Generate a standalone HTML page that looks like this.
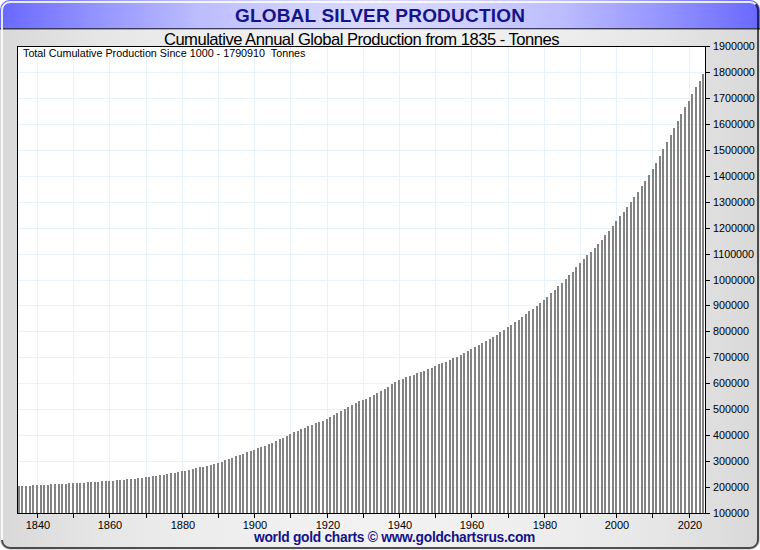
<!DOCTYPE html>
<html><head><meta charset="utf-8">
<style>
html,body{margin:0;padding:0;background:#fff;}
body{width:760px;height:550px;position:relative;overflow:hidden;font-family:"Liberation Sans",sans-serif;}
.frame{position:absolute;left:0;top:0;width:760px;height:550px;border-radius:10px;overflow:hidden;
background:linear-gradient(to right,#d8d8d8 0%,#e6e6e6 13%,#ededed 26%,#f0f0f0 38%,#f2f2f2 50%,#f0f0f0 62%,#ededed 74%,#e6e6e6 87%,#d8d8d8 100%);}
.hdr{position:absolute;left:0;top:0;width:760px;height:28px;
background:linear-gradient(to right,#6868ff 0%,#9595ff 13%,#bcbcff 26%,#cfcfff 38%,#d9d9ff 50%,#cfcfff 62%,#bcbcff 74%,#9595ff 87%,#6868ff 100%);}
.hl1{position:absolute;left:0;top:28px;width:760px;height:1px;background:#3a3a5c;}
.hl2{position:absolute;left:0;top:29px;width:760px;height:1px;background:linear-gradient(to right,#7a7aff 0%,#dadaff 50%,#7a7aff 100%);}
.title{position:absolute;left:0;width:760px;top:5px;text-align:center;font-weight:bold;font-size:19px;letter-spacing:0.2px;color:#141488;line-height:22px;}
.sub{position:absolute;left:0;width:723px;top:30px;text-align:center;font-size:16.6px;letter-spacing:-0.5px;color:#000;line-height:20px;}
.tot{position:absolute;left:23px;top:46px;font-size:10.75px;color:#000;line-height:14px;white-space:pre;}
.yl{position:absolute;left:713px;font-size:10.75px;line-height:14px;color:#000;}
.xl{position:absolute;top:518px;width:41px;text-align:center;font-size:11px;line-height:14px;color:#000;}
.foot{position:absolute;left:0;width:789px;top:529px;text-align:center;font-weight:bold;font-size:13.8px;letter-spacing:-0.28px;color:#141488;line-height:17px;}
svg{position:absolute;left:0;top:0;}
</style></head><body>
<div class="frame">
<div class="hdr"></div><div class="hl1"></div><div class="hl2"></div>
</div>
<svg width="760" height="550" shape-rendering="crispEdges">
<rect x="17" y="46" width="689" height="468" fill="#fff"/>
<g fill="#e7f3f9"><rect x="37" y="47" width="1" height="466"/><rect x="73" y="47" width="1" height="466"/><rect x="109" y="47" width="1" height="466"/><rect x="146" y="47" width="1" height="466"/><rect x="182" y="47" width="1" height="466"/><rect x="218" y="47" width="1" height="466"/><rect x="254" y="47" width="1" height="466"/><rect x="290" y="47" width="1" height="466"/><rect x="327" y="47" width="1" height="466"/><rect x="363" y="47" width="1" height="466"/><rect x="399" y="47" width="1" height="466"/><rect x="435" y="47" width="1" height="466"/><rect x="471" y="47" width="1" height="466"/><rect x="508" y="47" width="1" height="466"/><rect x="544" y="47" width="1" height="466"/><rect x="580" y="47" width="1" height="466"/><rect x="616" y="47" width="1" height="466"/><rect x="652" y="47" width="1" height="466"/><rect x="689" y="47" width="1" height="466"/><rect x="18" y="487" width="687" height="1"/><rect x="18" y="461" width="687" height="1"/><rect x="18" y="435" width="687" height="1"/><rect x="18" y="409" width="687" height="1"/><rect x="18" y="383" width="687" height="1"/><rect x="18" y="357" width="687" height="1"/><rect x="18" y="331" width="687" height="1"/><rect x="18" y="305" width="687" height="1"/><rect x="18" y="280" width="687" height="1"/><rect x="18" y="254" width="687" height="1"/><rect x="18" y="228" width="687" height="1"/><rect x="18" y="202" width="687" height="1"/><rect x="18" y="176" width="687" height="1"/><rect x="18" y="150" width="687" height="1"/><rect x="18" y="124" width="687" height="1"/><rect x="18" y="98" width="687" height="1"/><rect x="18" y="72" width="687" height="1"/></g>
<g fill="#838383"><rect x="18" y="486" width="2" height="27"/><rect x="21" y="486" width="2" height="27"/><rect x="25" y="486" width="2" height="27"/><rect x="29" y="486" width="2" height="27"/><rect x="32" y="485" width="2" height="28"/><rect x="36" y="485" width="2" height="28"/><rect x="40" y="485" width="2" height="28"/><rect x="43" y="485" width="2" height="28"/><rect x="47" y="485" width="2" height="28"/><rect x="50" y="484" width="2" height="29"/><rect x="54" y="484" width="2" height="29"/><rect x="58" y="484" width="2" height="29"/><rect x="61" y="484" width="2" height="29"/><rect x="65" y="484" width="2" height="29"/><rect x="68" y="483" width="2" height="30"/><rect x="72" y="483" width="2" height="30"/><rect x="76" y="483" width="2" height="30"/><rect x="79" y="483" width="2" height="30"/><rect x="83" y="483" width="2" height="30"/><rect x="87" y="482" width="2" height="31"/><rect x="90" y="482" width="2" height="31"/><rect x="94" y="482" width="2" height="31"/><rect x="97" y="482" width="2" height="31"/><rect x="101" y="481" width="2" height="32"/><rect x="105" y="481" width="2" height="32"/><rect x="108" y="481" width="2" height="32"/><rect x="112" y="481" width="2" height="32"/><rect x="116" y="480" width="2" height="33"/><rect x="119" y="480" width="2" height="33"/><rect x="123" y="480" width="2" height="33"/><rect x="126" y="479" width="2" height="34"/><rect x="130" y="479" width="2" height="34"/><rect x="134" y="479" width="2" height="34"/><rect x="137" y="478" width="2" height="35"/><rect x="141" y="478" width="2" height="35"/><rect x="145" y="477" width="2" height="36"/><rect x="148" y="477" width="2" height="36"/><rect x="152" y="476" width="2" height="37"/><rect x="155" y="476" width="2" height="37"/><rect x="159" y="475" width="2" height="38"/><rect x="163" y="475" width="2" height="38"/><rect x="166" y="474" width="2" height="39"/><rect x="170" y="473" width="2" height="40"/><rect x="174" y="473" width="2" height="40"/><rect x="177" y="472" width="2" height="41"/><rect x="181" y="471" width="2" height="42"/><rect x="184" y="471" width="2" height="42"/><rect x="188" y="470" width="2" height="43"/><rect x="192" y="469" width="2" height="44"/><rect x="195" y="468" width="2" height="45"/><rect x="199" y="467" width="2" height="46"/><rect x="202" y="467" width="2" height="46"/><rect x="206" y="466" width="2" height="47"/><rect x="210" y="465" width="2" height="48"/><rect x="213" y="464" width="2" height="49"/><rect x="217" y="463" width="2" height="50"/><rect x="221" y="462" width="2" height="51"/><rect x="224" y="460" width="2" height="53"/><rect x="228" y="459" width="2" height="54"/><rect x="231" y="458" width="2" height="55"/><rect x="235" y="456" width="2" height="57"/><rect x="239" y="455" width="2" height="58"/><rect x="242" y="454" width="2" height="59"/><rect x="246" y="452" width="2" height="61"/><rect x="250" y="451" width="2" height="62"/><rect x="253" y="450" width="2" height="63"/><rect x="257" y="448" width="2" height="65"/><rect x="260" y="447" width="2" height="66"/><rect x="264" y="446" width="2" height="67"/><rect x="268" y="444" width="2" height="69"/><rect x="271" y="443" width="2" height="70"/><rect x="275" y="441" width="2" height="72"/><rect x="279" y="439" width="2" height="74"/><rect x="282" y="438" width="2" height="75"/><rect x="286" y="436" width="2" height="77"/><rect x="289" y="434" width="2" height="79"/><rect x="293" y="432" width="2" height="81"/><rect x="297" y="431" width="2" height="82"/><rect x="300" y="429" width="2" height="84"/><rect x="304" y="428" width="2" height="85"/><rect x="307" y="426" width="2" height="87"/><rect x="311" y="425" width="2" height="88"/><rect x="315" y="423" width="2" height="90"/><rect x="318" y="422" width="2" height="91"/><rect x="322" y="421" width="2" height="92"/><rect x="326" y="419" width="2" height="94"/><rect x="329" y="417" width="2" height="96"/><rect x="333" y="415" width="2" height="98"/><rect x="336" y="413" width="2" height="100"/><rect x="340" y="411" width="2" height="102"/><rect x="344" y="409" width="2" height="104"/><rect x="347" y="407" width="2" height="106"/><rect x="351" y="405" width="2" height="108"/><rect x="355" y="403" width="2" height="110"/><rect x="358" y="401" width="2" height="112"/><rect x="362" y="400" width="2" height="113"/><rect x="365" y="399" width="2" height="114"/><rect x="369" y="397" width="2" height="116"/><rect x="373" y="395" width="2" height="118"/><rect x="376" y="393" width="2" height="120"/><rect x="380" y="391" width="2" height="122"/><rect x="384" y="389" width="2" height="124"/><rect x="387" y="387" width="2" height="126"/><rect x="391" y="384" width="2" height="129"/><rect x="394" y="382" width="2" height="131"/><rect x="398" y="380" width="2" height="133"/><rect x="402" y="379" width="2" height="134"/><rect x="405" y="377" width="2" height="136"/><rect x="409" y="376" width="2" height="137"/><rect x="413" y="375" width="2" height="138"/><rect x="416" y="373" width="2" height="140"/><rect x="420" y="372" width="2" height="141"/><rect x="423" y="371" width="2" height="142"/><rect x="427" y="369" width="2" height="144"/><rect x="431" y="368" width="2" height="145"/><rect x="434" y="366" width="2" height="147"/><rect x="438" y="364" width="2" height="149"/><rect x="441" y="363" width="2" height="150"/><rect x="445" y="362" width="2" height="151"/><rect x="449" y="360" width="2" height="153"/><rect x="452" y="358" width="2" height="155"/><rect x="456" y="357" width="2" height="156"/><rect x="460" y="355" width="2" height="158"/><rect x="463" y="353" width="2" height="160"/><rect x="467" y="351" width="2" height="162"/><rect x="470" y="349" width="2" height="164"/><rect x="474" y="347" width="2" height="166"/><rect x="478" y="345" width="2" height="168"/><rect x="481" y="343" width="2" height="170"/><rect x="485" y="341" width="2" height="172"/><rect x="489" y="339" width="2" height="174"/><rect x="492" y="337" width="2" height="176"/><rect x="496" y="335" width="2" height="178"/><rect x="499" y="332" width="2" height="181"/><rect x="503" y="330" width="2" height="183"/><rect x="507" y="327" width="2" height="186"/><rect x="510" y="325" width="2" height="188"/><rect x="514" y="322" width="2" height="191"/><rect x="518" y="320" width="2" height="193"/><rect x="521" y="317" width="2" height="196"/><rect x="525" y="314" width="2" height="199"/><rect x="528" y="311" width="2" height="202"/><rect x="532" y="309" width="2" height="204"/><rect x="536" y="306" width="2" height="207"/><rect x="539" y="303" width="2" height="210"/><rect x="543" y="300" width="2" height="213"/><rect x="546" y="297" width="2" height="216"/><rect x="550" y="293" width="2" height="220"/><rect x="554" y="290" width="2" height="223"/><rect x="557" y="286" width="2" height="227"/><rect x="561" y="283" width="2" height="230"/><rect x="565" y="279" width="2" height="234"/><rect x="568" y="275" width="2" height="238"/><rect x="572" y="272" width="2" height="241"/><rect x="575" y="267" width="2" height="246"/><rect x="579" y="263" width="2" height="250"/><rect x="583" y="259" width="2" height="254"/><rect x="586" y="255" width="2" height="258"/><rect x="590" y="252" width="2" height="261"/><rect x="594" y="248" width="2" height="265"/><rect x="597" y="244" width="2" height="269"/><rect x="601" y="240" width="2" height="273"/><rect x="604" y="235" width="2" height="278"/><rect x="608" y="231" width="2" height="282"/><rect x="612" y="226" width="2" height="287"/><rect x="615" y="221" width="2" height="292"/><rect x="619" y="216" width="2" height="297"/><rect x="623" y="212" width="2" height="301"/><rect x="626" y="207" width="2" height="306"/><rect x="630" y="202" width="2" height="311"/><rect x="633" y="197" width="2" height="316"/><rect x="637" y="192" width="2" height="321"/><rect x="641" y="186" width="2" height="327"/><rect x="644" y="181" width="2" height="332"/><rect x="648" y="175" width="2" height="338"/><rect x="652" y="169" width="2" height="344"/><rect x="655" y="163" width="2" height="350"/><rect x="659" y="156" width="2" height="357"/><rect x="662" y="149" width="2" height="364"/><rect x="666" y="142" width="2" height="371"/><rect x="670" y="135" width="2" height="378"/><rect x="673" y="128" width="2" height="385"/><rect x="677" y="121" width="2" height="392"/><rect x="680" y="114" width="2" height="399"/><rect x="684" y="107" width="2" height="406"/><rect x="688" y="101" width="2" height="412"/><rect x="691" y="94" width="2" height="419"/><rect x="695" y="87" width="2" height="426"/><rect x="699" y="81" width="2" height="432"/><rect x="702" y="74" width="2" height="439"/></g>
<g fill="#000">
<rect x="17" y="46" width="689" height="1"/>
<rect x="17" y="46" width="1" height="468"/>
<rect x="705" y="46" width="1" height="468"/>
<rect x="17" y="513" width="689" height="1"/>
<rect x="706" y="513" width="4" height="1"/><rect x="706" y="487" width="4" height="1"/><rect x="706" y="461" width="4" height="1"/><rect x="706" y="435" width="4" height="1"/><rect x="706" y="409" width="4" height="1"/><rect x="706" y="383" width="4" height="1"/><rect x="706" y="357" width="4" height="1"/><rect x="706" y="331" width="4" height="1"/><rect x="706" y="305" width="4" height="1"/><rect x="706" y="280" width="4" height="1"/><rect x="706" y="254" width="4" height="1"/><rect x="706" y="228" width="4" height="1"/><rect x="706" y="202" width="4" height="1"/><rect x="706" y="176" width="4" height="1"/><rect x="706" y="150" width="4" height="1"/><rect x="706" y="124" width="4" height="1"/><rect x="706" y="98" width="4" height="1"/><rect x="706" y="72" width="4" height="1"/><rect x="706" y="46" width="4" height="1"/><rect x="37" y="514" width="1" height="4"/><rect x="73" y="514" width="1" height="4"/><rect x="109" y="514" width="1" height="4"/><rect x="146" y="514" width="1" height="4"/><rect x="182" y="514" width="1" height="4"/><rect x="218" y="514" width="1" height="4"/><rect x="254" y="514" width="1" height="4"/><rect x="290" y="514" width="1" height="4"/><rect x="327" y="514" width="1" height="4"/><rect x="363" y="514" width="1" height="4"/><rect x="399" y="514" width="1" height="4"/><rect x="435" y="514" width="1" height="4"/><rect x="471" y="514" width="1" height="4"/><rect x="508" y="514" width="1" height="4"/><rect x="544" y="514" width="1" height="4"/><rect x="580" y="514" width="1" height="4"/><rect x="616" y="514" width="1" height="4"/><rect x="652" y="514" width="1" height="4"/><rect x="689" y="514" width="1" height="4"/>
</g>
</svg>
<svg width="760" height="550" style="position:absolute;left:0;top:0;pointer-events:none">
<path d="M2,540 L2,10 A8,8 0 0 1 10,2 L750,2 A8,8 0 0 1 755.66,4.34" fill="none" stroke="rgba(255,255,255,0.85)" stroke-width="2"/>
<path d="M755.66,4.34 A8,8 0 0 1 758,10 L758,540 A8,8 0 0 1 750,548 L10,548 A8,8 0 0 1 2,540" fill="none" stroke="rgba(0,0,0,0.66)" stroke-width="2"/>
</svg>
<div class="title">GLOBAL SILVER PRODUCTION</div>
<div class="sub">Cumulative Annual Global Production from 1835 - Tonnes</div>
<div class="tot">Total Cumulative Production Since 1000 - 1790910  Tonnes</div>
<div class="yl" style="top:506px">100000</div><div class="yl" style="top:480px">200000</div><div class="yl" style="top:454px">300000</div><div class="yl" style="top:428px">400000</div><div class="yl" style="top:402px">500000</div><div class="yl" style="top:376px">600000</div><div class="yl" style="top:350px">700000</div><div class="yl" style="top:324px">800000</div><div class="yl" style="top:298px">900000</div><div class="yl" style="top:273px">1000000</div><div class="yl" style="top:247px">1100000</div><div class="yl" style="top:221px">1200000</div><div class="yl" style="top:195px">1300000</div><div class="yl" style="top:169px">1400000</div><div class="yl" style="top:143px">1500000</div><div class="yl" style="top:117px">1600000</div><div class="yl" style="top:91px">1700000</div><div class="yl" style="top:65px">1800000</div><div class="yl" style="top:39px">1900000</div>
<div class="xl" style="left:17.5px">1840</div><div class="xl" style="left:89.5px">1860</div><div class="xl" style="left:162.5px">1880</div><div class="xl" style="left:234.5px">1900</div><div class="xl" style="left:307.5px">1920</div><div class="xl" style="left:379.5px">1940</div><div class="xl" style="left:451.5px">1960</div><div class="xl" style="left:524.5px">1980</div><div class="xl" style="left:596.5px">2000</div><div class="xl" style="left:669.5px">2020</div>
<div class="foot">world gold charts &copy; www.goldchartsrus.com</div>
</body></html>
